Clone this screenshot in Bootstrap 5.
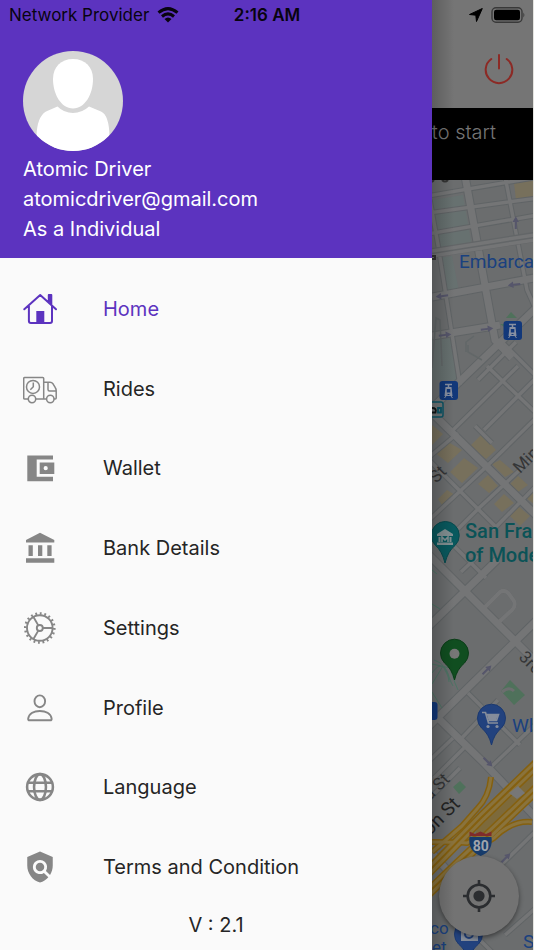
<!DOCTYPE html>
<html lang="en">
<head>
<meta charset="utf-8">
<meta name="viewport" content="width=device-width, initial-scale=1">
<title>Driver menu</title>
<link href="https://cdn.jsdelivr.net/npm/bootstrap@5.3.0/dist/css/bootstrap.min.css" rel="stylesheet">
<style>
body { font-family: Inter, "Liberation Sans", sans-serif; font-size: 20px; background: #fafafa; }
.status-bar { z-index: 3; height: 30px; font-size: 17px; line-height: 30px; color: #08040f; padding: 0 9px; }
.status-bar > * { flex: 1 1 0; }
.drawer { width: 80.9%; background: #fafafa; color: #252525; }
.drawer-head { background: #5c33bf; color: #fff; padding: 51px 23px 14px; line-height: 30px; }
.avatar { width: 100px; height: 100px; margin-bottom: 3px; }
.menu { padding-top: 11px; }
.menu a { color: #252525; gap: 46px; padding-left: 23px; }
.menu a svg { width: 34px; height: 34px; color: #868686; flex: none; }
.menu a.active, .menu a.active svg { color: #5c33bf; }
.version { height: 43px; line-height: 36px; }
.home-screen { background: #757575; border-right: 1px solid #e4e4e0; }
.shade { width: 22px; background: linear-gradient(90deg, #0003, #0000); }
.topbar { height: 108px; padding: 30px 17px 0; }
.notice { height: 72px; background: #000; color: #757575; padding: 9px 37px 0 0; line-height: 30px; }
.map-area svg.city { width: 100%; height: 100%; }
.map-area text { font-family: Roboto, "Liberation Sans", sans-serif; }
.locate, .locate:hover { width: 80px; height: 80px; right: 14px; bottom: 14px; background: #737373; box-shadow: 0 2px 5px #0007; }
</style>
<script src="https://cdn.jsdelivr.net/npm/bootstrap@5.3.0/dist/js/bootstrap.bundle.min.js"></script>
</head>
<body>
<div class="d-flex min-vh-100 position-relative overflow-hidden">
  <header class="status-bar position-absolute top-0 start-0 w-100 d-flex align-items-center">
    <div class="d-flex align-items-center gap-2 text-nowrap">Network Provider
      <svg width="22" height="16" viewBox="0 0 22 16" fill="none" stroke="currentColor" stroke-width="3" aria-hidden="true"><path d="M1.500 5.700Q11-2.500 20.500 5.700M5 9.500Q11 4.300 17 9.500"/><path d="M11 15.500L7.500 12Q11 9 14.500 12Z" fill="currentColor" stroke="none"/></svg>
    </div>
    <div class="text-center fw-semibold">2:16 AM</div>
    <div class="d-flex justify-content-end align-items-center gap-2">
      <svg width="14" height="14" viewBox="0 0 14 14" aria-hidden="true"><path d="M13.300.500L7.500 13.500 6.800 7.200.500 6.500Z" fill="#000" stroke="#000" stroke-linejoin="round"/></svg>
      <svg width="34" height="16" viewBox="0 0 34 16" aria-hidden="true"><rect x="1" y=".7" width="30" height="14.600" rx="4" fill="none" stroke="#393939" stroke-width="1.400"/><rect x="3" y="2.700" width="26" height="10.600" rx="2.300" fill="#000"/><path d="M32.400 5.500q2 2.500 0 5z" fill="#393939"/></svg>
    </div>
  </header>

  <aside class="drawer d-flex flex-column flex-shrink-0">
    <div class="drawer-head">
      <svg class="avatar d-block" viewBox="0 0 100 100" role="img" aria-label="Profile picture">
        <defs><clipPath id="round"><circle cx="50" cy="50" r="50"/></clipPath></defs>
        <g clip-path="url(#round)"><rect width="100" height="100" fill="#d6d6d6"/>
        <path d="M50 8C62 8 70 16 70 28C70 43 62 57.500 50 57.500S30 43 30 28C30 16 38 8 50 8Z" fill="#fff"/>
        <path d="M34.500 55.500Q41 62 50 62T66 55.500L78 60.500Q86 64 86.500 85V100H13.500V85Q14 66 23 60.500Z" fill="#fff"/></g>
      </svg>
      <div>Atomic Driver</div>
      <div>atomicdriver@gmail.com</div>
      <div>As a Individual</div>
    </div>
    <nav class="menu d-flex flex-column flex-fill" aria-label="Main menu">
      <a href="#" class="active d-flex flex-fill align-items-center text-decoration-none" aria-current="page">
        <svg viewBox="0 0 34 34" fill="none" stroke="currentColor" stroke-width="2" stroke-linecap="round" stroke-linejoin="round"><path d="M1.300 17.300L17.200 3 33 17.300M5.900 14V29Q5.900 31 7.900 31H27Q29 31 29 29V14M25.800 10V3H28.300V12.500"/><path d="M25.500 2.500H28.500V12L25.500 9.500Z" fill="currentColor" stroke="none"/><path d="M13.300 19H21.300V31H13.300Z" fill="currentColor" stroke="none"/></svg>
        <span>Home</span></a>
      <a href="#" class="d-flex flex-fill align-items-center text-decoration-none">
        <svg viewBox="0 0 34 34" fill="none" stroke="currentColor" stroke-width="1.500" stroke-linejoin="round"><path d="M5.300 27H1.700Q.7 27 .7 26V6.500Q.7 5.500 1.700 5.500H19.700Q20.700 5.500 20.700 6.500V27M12.700 27H23.600M20.700 10.300H27Q28.800 10.300 30 11.800L32.300 15.700Q33.200 17 33.200 18.500V26Q33.200 27 32.200 27H31M25 10.500V17.500Q25 19 26.500 19H33"/><circle cx="10" cy="14.900" r="6.500"/><path d="M10.300 10.500V14.700L7.300 17.700"/><circle cx="9" cy="27" r="3.700"/><circle cx="27.300" cy="27" r="3.700"/></svg>
        <span>Rides</span></a>
      <a href="#" class="d-flex flex-fill align-items-center text-decoration-none">
        <svg viewBox="0 0 34 34" fill="currentColor"><path d="M4.300 4.500H30V8.500H13.700V25.800H30V30.300H4.300Z"/><path fill-rule="evenodd" d="M16.700 11.500H31.300V22.900H16.700ZM22.700 15.100A2.100 2.100 0 1 0 22.700 19.300 2.100 2.100 0 1 0 22.700 15.100Z"/></svg>
        <span>Wallet</span></a>
      <a href="#" class="d-flex flex-fill align-items-center text-decoration-none">
        <svg viewBox="0 0 34 34" fill="currentColor"><path d="M17 1.700L31.300 9V11.500H3V9ZM5.500 14.300H9.800V25H5.500ZM15 14.300H19.300V25H15ZM24.300 14.300H28.600V25H24.300ZM3 27.300H31.300V31.800H3Z"/></svg>
        <span>Bank Details</span></a>
      <a href="#" class="d-flex flex-fill align-items-center text-decoration-none">
        <svg viewBox="0 0 34 34" fill="none" stroke="currentColor" stroke-width="1.900"><circle cx="16.800" cy="17" r="12.800"/><circle cx="16.800" cy="17" r="14.500" stroke-width="2.600" pathLength="80" stroke-dasharray="1.600 2.400"/><circle cx="16.800" cy="17" r="3"/><path d="M19.800 17H29.800M15.300 14.400L10.300 5.700M15.300 19.600L10.300 28.300"/></svg>
        <span>Settings</span></a>
      <a href="#" class="d-flex flex-fill align-items-center text-decoration-none">
        <svg viewBox="0 0 34 34" fill="none" stroke="currentColor" stroke-width="1.900"><ellipse cx="16.800" cy="10.300" rx="5.300" ry="5.900"/><path d="M6.500 29.300Q5 29.300 5.200 27.500C6 22.500 11 20 16.800 20S27.800 22.500 28.600 27.500Q28.800 29.300 27.300 29.300Z"/></svg>
        <span>Profile</span></a>
      <a href="#" class="d-flex flex-fill align-items-center text-decoration-none">
        <svg viewBox="0 0 24 24" fill="none" stroke="currentColor" stroke-width="1.800"><circle cx="12" cy="12" r="9.100"/><ellipse cx="12" cy="12" rx="4.200" ry="9.100"/><path d="M3.200 9H20.800M3.200 15H20.800"/></svg>
        <span>Language</span></a>
      <a href="#" class="d-flex flex-fill align-items-center text-decoration-none">
        <svg viewBox="0 0 24 24" fill="currentColor"><path d="M21 5l-9-4-9 4v6c0 5.550 3.840 10.740 9 12 2.300-.56 4.330-1.900 5.880-3.710l-3.120-3.120c-1.940 1.290-4.580 1.070-6.290-.64-1.950-1.950-1.950-5.120 0-7.070 1.950-1.950 5.120-1.950 7.070 0 1.710 1.710 1.920 4.350.64 6.290l2.900 2.900C20.290 15.690 21 13.380 21 11V5z"/><circle cx="12" cy="12" r="3"/></svg>
        <span>Terms and Condition</span></a>
    </nav>
    <div class="version text-center">V : 2.1</div>
  </aside>

  <main class="home-screen d-flex flex-column flex-fill overflow-hidden position-relative">
    <div class="topbar text-end">
      <button type="button" class="btn p-0 border-0" aria-label="Go online"><svg class="d-block" width="34" height="68" viewBox="0 0 34 68" fill="none" stroke="#8c2a25" stroke-width="2" stroke-linecap="round"><path d="M17 25V38.500M9.300 29A13.300 13.300 0 1 0 24.700 29"/></svg></button>
    </div>
    <div class="notice fw-light d-flex justify-content-end text-nowrap">to start</div>
    <div class="map-area flex-fill position-relative overflow-hidden">
      <svg class="city position-absolute top-0 start-0" viewBox="432 180 102 770" preserveAspectRatio="xMinYMin slice" role="img" aria-label="City map">
        <defs>
          <g id="avenues" fill="none">
            <path d="M465 176L495 340 512 358M432 297L534 278M432 336L500 325M540 304L428 412M428 409L538 517M437 563L540 666M437 563L428 554M497 560L428 627M428 727L540 617M437 717L485 764 538 820M432 853L460 885"/>
          </g>
          <g id="streets" fill="none">
            <path d="M505 176L527 290 537 312M430 200L438 245 460 385M428 196L538 177M428 213L538 198M428 234L538 215M518 366L450 433M538 376L484 430M475 426L492 443M487 366L538 415M428 521L486 467 538 416M454 533L479 508 538 453M493 530L538 484M428 459L496 527M428 458L458 433M468 693L520 745M428 762L453 738M498 700L458 742M466 746L434 778M538 722L491 767M454 546L486 578M461 572L478 556M500 340L538 378M516 342L478 380"/>
            <path d="M484 608L500 592Q505 589 509 594L514 601Q516 606 512 610L499 622" stroke-width="4"/>
            <path d="M538 829L494 872M505 935L538 906M470 930L495 955M428 800L460 768"/>
          </g>
        </defs>
        <rect x="432" y="180" width="110" height="770" fill="#6b6d6e"/>
        <path d="M432 200L463 195 472 246 438 250ZM438 258L452 256 460 296 444 296ZM432 340L452 338 458 380 432 380Z" fill="#677170"/>
        <path d="M514 183L534 180V198L516 200ZM432 425L443 434 432 445ZM434 452L448 442 462 450 448 463ZM470 446L482 434 496 450 486 459ZM450 472L464 458 478 468 462 483ZM492 464L500 460 514 472 505 477ZM478 484L488 475 498 486 489 493ZM494 504L504 494 514 503 502 512ZM438 499L447 490 455 495 442 505ZM508 514L518 506 530 516 520 526ZM509 485L518 476 528 485 518 492ZM526 498L534 491V504Z" fill="#77705c"/>
        <use href="#streets" stroke="#606466" stroke-width="5.500"/>
        <use href="#avenues" stroke="#606466" stroke-width="9"/>
        <use href="#streets" stroke="#747576" stroke-width="3.500"/>
        <use href="#avenues" stroke="#747576" stroke-width="7"/>
        <path d="M432 253L534 237" stroke="#636668" stroke-width="10"/><path d="M432 251L534 235M432 256L534 240" stroke="#747576" stroke-width="3.500"/>
        <path d="M466 352V342L474 336M468 345V352L482 360M432 368L436 318 440 320 442 366" fill="none" stroke="#626768" stroke-width="1.500"/>
        <path d="M506 318L511 312 517 318ZM500 324H507V329ZM501 691L510 680 525 695 514 705ZM453 787L460 781 466 787 459 794Z" fill="#4f715b"/>
        <path d="M502 692Q509 686 514 691" fill="none" stroke="#6c6e6f" stroke-width="3"/>
        <g fill="none" stroke="#4e7465" stroke-width="1"><path d="M432 570L437 574M432 604L440 609M432 664L450 668 455 683 458 690M432 673Q444 656 450 680M434 660Q448 664 449 682M432 684L443 666 453 686M432 692L442 708"/></g>
        <g fill="#56566b">
          <g id="arrow"><path d="M514.800 229V222H512.500L515.800 216.500 519 222H516.800V229Z"/></g>
          <use href="#arrow" transform="rotate(-97 515.800 223) translate(-61 -9)"/>
          <use href="#arrow" transform="rotate(-97 515.800 223) translate(-63.500 -82)"/>
          <use href="#arrow" transform="translate(-71 112) rotate(83 515.800 223)"/>
          <use href="#arrow" transform="translate(-29 106) rotate(83 515.800 223)"/>
          <use href="#arrow" transform="translate(-29 447) rotate(45 515.800 223)"/>
          <use href="#arrow" transform="translate(-28 539) rotate(135 515.800 223)"/>
          <use href="#arrow" transform="translate(-10 635) rotate(45 515.800 223)"/>
        </g>

        <g fill="none" stroke-linejoin="round">
          <path d="M480 822L538 768V785L470 848Z" fill="#7d6a3b"/>
          <g stroke="#85600f"><path d="M491 777Q489 797 477 809L462 826 432 852" stroke-width="6"/><path d="M428 842Q455 842 467 843L482 835" stroke-width="6"/><path d="M465 856L494 838Q512 820 532 822" stroke-width="6"/><path d="M428 872L482 817 540 761M428 893L457 865 475 848 540 786" stroke-width="11"/></g>
          <g stroke="#8a733c"><path d="M491 777Q489 797 477 809L462 826 432 852" stroke-width="3"/><path d="M428 842Q455 842 467 843L482 835" stroke-width="3"/><path d="M465 856L494 838Q512 820 532 822" stroke-width="3"/><path d="M428 872L482 817 540 761M428 893L457 865 475 848 540 786" stroke-width="8"/></g>
          <path d="M428 872L482 817 540 761M428 893L457 865 475 848 540 786" stroke="#85600f" stroke-width="2"/>
          <path d="M509 793L518 786 525 793 517 799Z" fill="#777"/>
        </g>

        <g font-size="19" fill="#1a417f"><text x="459" y="268">Embarcad</text><text x="512" y="732">Wl</text><text x="430" y="934" font-size="17">co</text><text x="432" y="953" font-size="17">et</text><text x="523" y="948">S</text></g>
        <g font-size="20" font-weight="500" fill="#0b5357"><text x="465" y="538">San Fra</text><text x="465" y="562">of Mode</text></g>
        <g font-size="17" fill="#343536"><text transform="translate(520 474) rotate(-45)">Minn</text><text transform="translate(427 493) rotate(-45)">c St</text><text transform="translate(518 658) rotate(45)">3rd</text><text transform="translate(430 801) rotate(-45)">a St</text><text transform="translate(430 836) rotate(-45)" font-size="19" fill="#222">on St</text></g>
        <path d="M432 182L434 180M442 180Q445 183 448 180M432 256H435V259H432" stroke="#333" stroke-width="2" fill="none"/>

        <g id="tram"><rect x="503.500" y="321" width="18.500" height="19" rx="3" fill="#12387a"/><path d="M509 324.500H516M512.500 324.500V328" stroke="#8790a2" stroke-width="1.500"/><path fill-rule="evenodd" d="M509.500 327H515.500L516.500 336H508.500ZM510.800 329V332.500H514.300V329ZM511.500 334V335H513.500V334Z" fill="#8790a2"/><path d="M510 336L508.500 338M515 336L516.500 338" stroke="#8790a2"/></g>
        <use href="#tram" x="-64" y="60"/>
        <rect x="424" y="402" width="19" height="15" rx="2" fill="#737677" stroke="#0c5667" stroke-width="1.500"/><path d="M432 408Q437 408 435.500 412.500H432" fill="none" stroke="#101516" stroke-width="1.800"/><path d="M438 408H441V412.500H438Z" fill="none" stroke="#0c5667" stroke-width="1.800"/>
        <rect x="426" y="702" width="11.500" height="18" rx="3" fill="#12387a"/>

        <path d="M445 563Q442 551 435.500 545.500A14 14 0 1 1 455 545.500Q448 551 445 563Z" fill="#09595e" stroke="#084a4e"/>
        <path d="M445 529L453 534V536H437V534ZM438.500 537H440.500V542H438.500ZM449.500 537H451.500V542H449.500ZM437 542.500H453V545H437Z" fill="#829092"/><path d="M442 542V537L445 540 448 537V542" stroke="#829092" stroke-width="1.600" fill="none"/>
        <path d="M454.500 680Q452 669 444.500 663A14 14 0 1 1 464.500 663Q457 669 454.500 680Z" fill="#104e20" stroke="#0b3d18"/><circle cx="454.500" cy="653.700" r="5" fill="#777"/>
        <path id="blue-pin" d="M491.500 745Q489 734 481.500 728A14 14 0 1 1 501.500 728Q494 734 491.500 745Z" fill="#22427e" stroke="#1b3970"/>
        <path d="M482 712.500H485.500L488.500 723H498M486.500 714.500H498.500L496.500 720.500H488.500" fill="none" stroke="#858d9b" stroke-width="1.700"/><path d="M487 715H498L496 720H488.500Z" fill="#858d9b"/><circle cx="488" cy="726.500" r="1.600" fill="#858d9b"/><circle cx="497" cy="726.500" r="1.600" fill="#858d9b"/>
        <use href="#blue-pin" x="-23" y="216"/><path d="M461 929H478V941H461Z" fill="#858d9b"/><circle cx="469" cy="934" r="4" fill="none" stroke="#22427e" stroke-width="2"/>

        <path d="M469.500 837H491.500Q493.500 851 480.700 856Q467.500 851 469.500 837Z" fill="#173c6c"/><path d="M469.500 836V831.500L475 834 480.500 831.500 486 834 491.500 831.500V836Z" fill="#802c2b"/><text x="480.700" y="851" text-anchor="middle" font-size="14" font-weight="700" fill="#a0a5ac">80</text>
      </svg>
      <button type="button" class="locate btn rounded-circle border-0 p-0 position-absolute d-flex align-items-center justify-content-center" aria-label="My location"><svg width="32" height="32" viewBox="0 0 32 32" fill="none" stroke="#2b2d30" stroke-width="2.600"><circle cx="16" cy="16" r="11.300"/><circle cx="16" cy="16" r="5.600" fill="#2b2d30" stroke="none"/><path d="M16 0V5M16 27V32M0 16H5M27 16H32"/></svg></button>
    </div>
    <div class="shade position-absolute top-0 bottom-0 start-0 pe-none"></div>
  </main>
</div>
</body>
</html>
